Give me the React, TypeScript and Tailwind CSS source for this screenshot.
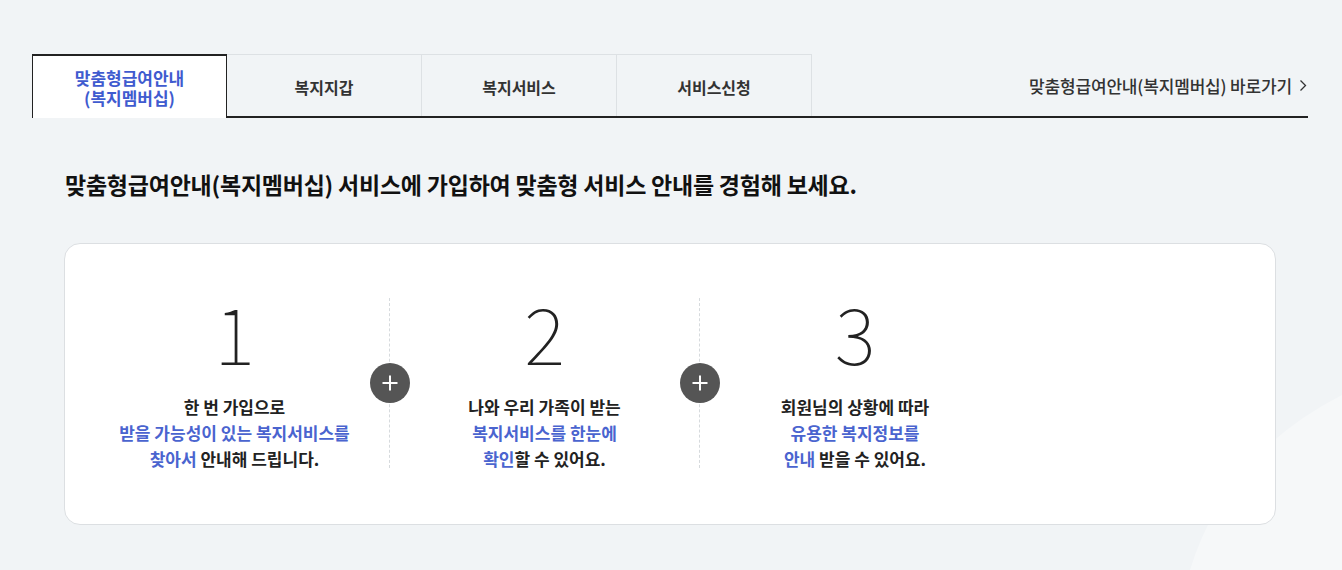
import React from 'react';

const tabs = ['복지지갑', '복지서비스', '서비스신청'];

const steps = [
  {
    num: '1',
    lines: [
      [{ t: '한 번 가입으로' }],
      [{ t: '받을 가능성이 있는 복지서비스를', blue: true }],
      [{ t: '찾아서', blue: true }, { t: ' 안내해 드립니다.' }],
    ],
  },
  {
    num: '2',
    lines: [
      [{ t: '나와 우리 가족이 받는' }],
      [{ t: '복지서비스를 한눈에', blue: true }],
      [{ t: '확인', blue: true }, { t: '할 수 있어요.' }],
    ],
  },
  {
    num: '3',
    lines: [
      [{ t: '회원님의 상황에 따라' }],
      [{ t: '유용한 복지정보를', blue: true }],
      [{ t: '안내', blue: true }, { t: ' 받을 수 있어요.' }],
    ],
  },
];

function PlusCircle() {
  return (
    <div className="absolute right-[-21px] top-[65px] z-10 flex h-[40px] w-[40px] items-center justify-center rounded-full bg-[#555555]">
      <svg width="18" height="18" viewBox="0 0 18 18" fill="none">
        <path d="M9 1.5v15M1.5 9h15" stroke="#fff" strokeWidth="2" />
      </svg>
    </div>
  );
}

export default function App() {
  return (
    <div
      className="relative min-h-[570px] w-full overflow-hidden bg-[#f1f4f6] text-[#222]"
      style={{ fontFamily: '"Noto Sans CJK KR", "Noto Sans", sans-serif' }}
    >
      {/* background shape */}
      <svg className="absolute bottom-0 right-0" width="160" height="180" viewBox="1182 390 160 180">
        <path d="M1190 570 Q1225 455 1342 395 L1342 570 Z" fill="#f6f8f9" />
      </svg>

      <div className="relative pl-[32px] pr-[34px] pt-[54px]">
        {/* tabs */}
        <div className="flex h-[64px] border-b-2 border-[#222]">
          <div className="relative z-10 -mb-[2px] flex h-[64px] w-[195px] items-center justify-center border-x border-t-2 border-[#222] bg-white pt-[2px] text-center text-[17px] font-bold leading-[20px] text-[#3f5bcf]">
            <span>
              맞춤형급여안내
              <br />
              (복지멤버십)
            </span>
          </div>
          {tabs.map((t) => (
            <div
              key={t}
              className="flex w-[195px] items-center justify-center border-r border-t border-[#dde1e4] pt-[2px] text-[16px] font-semibold text-[#333]"
            >
              {t}
            </div>
          ))}
          <div className="flex flex-1 items-center justify-end pt-[1px] text-[17px] font-medium tracking-[-0.01em] text-[#333]">
            맞춤형급여안내(복지멤버십) 바로가기
            <svg className="ml-[7px] mr-[1px]" width="8" height="13" viewBox="0 0 8 13" fill="none">
              <path d="M1.5 1.5l5 5-5 5" stroke="#333" strokeWidth="1.3" />
            </svg>
          </div>
        </div>

        {/* heading */}
        <h2 className="mt-[51px] pl-[33px] text-[23px] font-bold leading-[30px] tracking-[-0.01em] text-[#111]">
          맞춤형급여안내(복지멤버십) 서비스에 가입하여 맞춤형 서비스 안내를 경험해 보세요.
        </h2>

        {/* card */}
        <div className="ml-[32px] mr-[32px] mt-[44px] h-[282px] rounded-[16px] border border-[#dcdfe2] bg-white pl-[15px] pt-[54px]">
          <div className="grid grid-cols-[310px_310px_310px]">
            {steps.map((s, i) => (
              <div
                key={s.num}
                className={`relative flex h-[170px] flex-col items-center ${
                  i < 2 ? 'border-r border-dashed border-[#d6dadd]' : ''
                }`}
              >
                <div className="mt-[-12px] h-[108px] shrink-0 text-[78px] font-thin leading-[90px] text-[#222]">
                  {s.num}
                </div>
                <div className="shrink-0 text-center text-[17px] font-semibold leading-[26px]">
                  {s.lines.map((line, li) => (
                    <p key={li}>
                      {line.map((seg, si) => (
                        <span key={si} className={seg.blue ? 'text-[#4a64cf]' : 'text-[#222]'}>
                          {seg.t}
                        </span>
                      ))}
                    </p>
                  ))}
                </div>
                {i < 2 && <PlusCircle />}
              </div>
            ))}
          </div>
        </div>
      </div>
    </div>
  );
}
